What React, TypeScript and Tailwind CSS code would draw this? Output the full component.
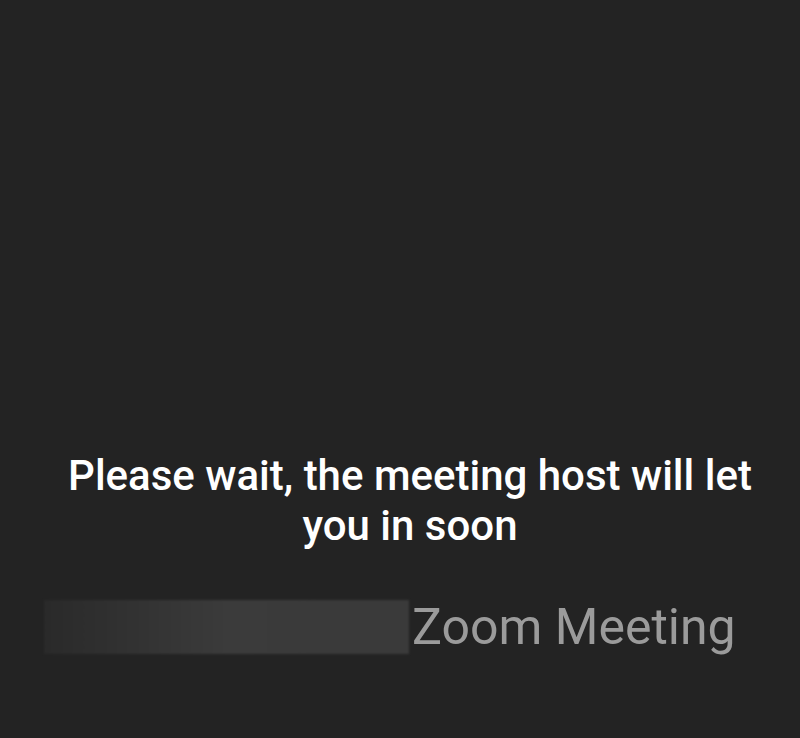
export default function App() {
  return (
    <div
      className="w-[800px] h-[738px] bg-[#232323] flex flex-col items-center overflow-hidden"
      style={{ fontFamily: 'Roboto, "Liberation Sans", sans-serif' }}
    >
      <p className="mt-[451px] pl-[20px] w-full text-center text-white text-[42px] leading-[50px] font-medium">
        Please wait, the meeting host will let
        <br />
        you in soon
      </p>

      <div className="mt-[49px] flex items-center w-full pl-[44px]">
        <div className="w-[365px] h-[54px] bg-gradient-to-r from-[#2a2a2a] via-[#3b3b3b] to-[#3a3a3a] blur-[1px]" />
        <span className="ml-[3px] text-[50px] leading-[54px] text-[#9b9b9b]">Zoom Meeting</span>
      </div>
    </div>
  );
}
